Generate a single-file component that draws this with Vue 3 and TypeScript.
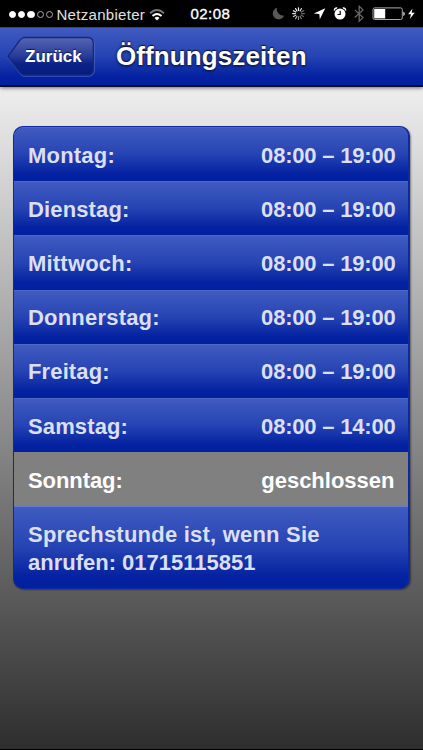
<script setup lang="ts">
interface OpeningHours {
  key: string
  day: string
  time: string
  closed?: boolean
}

const hours: OpeningHours[] = [
  { key: 'mo', day: 'Montag:', time: '08:00 – 19:00' },
  { key: 'di', day: 'Dienstag:', time: '08:00 – 19:00' },
  { key: 'mi', day: 'Mittwoch:', time: '08:00 – 19:00' },
  { key: 'do', day: 'Donnerstag:', time: '08:00 – 19:00' },
  { key: 'fr', day: 'Freitag:', time: '08:00 – 19:00' },
  { key: 'sa', day: 'Samstag:', time: '08:00 – 14:00' },
  { key: 'so', day: 'Sonntag:', time: 'geschlossen', closed: true },
]

const signal: boolean[] = [true, true, true, false, false]
const spokes: number[] = [1, 0.9, 0.45, 0.4, 0.4, 0.5, 0.6, 0.7, 0.8, 0.9, 1, 1]
</script>

<template>
  <div class="screen">
    <header class="status">
      <div class="carrier">
        <span class="signal">
          <i v-for="(on, i) in signal" :key="i" class="dot" :class="{ on }"></i>
        </span>
        <span class="network">Netzanbieter</span>
        <svg class="wifi" width="16" height="12" viewBox="0 0 16 12" fill="none" stroke="#fff" stroke-width="1.9">
          <path d="M1 4.2Q8-2.1 15 4.2" stroke="#777" />
          <path d="M3.5 7Q8 3 12.5 7" />
          <path d="M5.5 8.9Q8 6.7 10.5 8.9L8 11.4Z" fill="#fff" stroke="none" />
        </svg>
      </div>
      <span class="clock">02:08</span>
      <svg class="indicators" width="153" height="28" viewBox="270 0 153 28">
        <path d="M277 7.8A5.9 5.9 0 1 0 284.2 15.6A6.5 6.5 0 0 1 277 7.8Z" fill="#585858" />
        <g stroke="#fff" stroke-width="1.15" stroke-linecap="round">
          <line
            v-for="(o, i) in spokes"
            :key="i"
            x1="298.5"
            y1="10.5"
            x2="298.5"
            y2="7.7"
            :opacity="o"
            :transform="`rotate(${i * 30} 298.5 13.6)`"
          />
        </g>
        <path d="M325.3 8.3L319.8 19.3L319.3 13.9L313.8 13.5Z" fill="#fff" />
        <g>
          <circle cx="340" cy="14" r="5.5" fill="#fff" />
          <path d="M334.5 10.6A2.2 2.2 0 0 1 337.2 8M342.8 8A2.2 2.2 0 0 1 345.5 10.6" fill="none" stroke="#fff" stroke-width="1.5" />
          <path d="M340.2 10.8V14.5H337.5" fill="none" stroke="#000" stroke-width="1.2" />
        </g>
        <path d="M354.8 9.9L363 17.6L359.2 21.2V6.3L363 9.9L354.8 17.5" fill="none" stroke="#686868" stroke-width="1.3" />
        <rect x="373" y="7.9" width="29.3" height="11.6" rx="1.6" fill="none" stroke="#aaa" stroke-width="1" />
        <rect x="374.2" y="9" width="11" height="9.4" fill="#fff" />
        <path d="M403.3 11.4A2.6 2.6 0 0 1 403.3 16.1Z" fill="#ddd" />
        <path d="M412.5 8.4L408.1 14.3H411L409.8 19.1L414.7 12.7H411.6Z" fill="#fff" />
      </svg>
    </header>

    <nav class="bar">
      <button class="back" type="button">
        <svg class="back-shape" width="90" height="42" viewBox="0 0 90 42">
          <defs>
            <linearGradient id="backFill" x1="0" y1="0" x2="0" y2="1">
              <stop offset="0" stop-color="#5566b2" />
              <stop offset="0.5" stop-color="#283b99" />
              <stop offset="0.7" stop-color="#0d2287" />
              <stop offset="1" stop-color="#061b80" />
            </linearGradient>
          </defs>
          <path d="M17.5 2.5H82Q88.3 2.5 88.3 8.5V34Q88.3 40.3 82 40.3H17.5Q14.5 39 12 35L2 21.5L12 7Q14.5 3.5 17.5 2.5Z" fill="none" stroke="#5c74cb" stroke-opacity="0.65" />
          <path d="M17.5 1.5H81.5Q87.3 1.5 87.3 7.5V33Q87.3 38.9 81.5 38.9H17.5Q15 38 12.5 34.5L2 20.4L12.5 6Q15 2.5 17.5 1.5Z" fill="url(#backFill)" stroke="#142878" stroke-width="1.3" />
        </svg>
        <span class="back-label">Zurück</span>
      </button>
      <h1 class="title">Öffnungszeiten</h1>
    </nav>

    <main class="content">
      <ul class="card">
        <li v-for="h in hours" :key="h.key" class="row" :class="{ closed: h.closed }">
          <span :class="['day', h.key]">{{ h.day }}</span>
          <span class="time">{{ h.time }}</span>
        </li>
        <li class="note">
          <span class="note-a">Sprechstunde ist, wenn Sie</span>
          <span class="note-b">anrufen: 01715115851</span>
        </li>
      </ul>
    </main>
  </div>
</template>

<style>
body {
  margin: 0;
  background: #000;
}
</style>

<style scoped>
.screen {
  width: 423px;
  height: 750px;
  overflow: hidden;
  display: flex;
  flex-direction: column;
  background: #000;
  font-family: "Liberation Sans", Arial, sans-serif;
}

.status {
  flex: none;
  height: 27px;
  display: grid;
  grid-template-columns: 190px 80px 153px;
  color: #fff;
  background: #000;
}

.carrier {
  display: flex;
  align-items: center;
  padding: 1px 0 0 8.5px;
}

.signal {
  display: flex;
  gap: 2px;
}

.dot {
  box-sizing: border-box;
  width: 7.4px;
  height: 7.4px;
  border: 1px solid #aaa;
  border-radius: 50%;
}

.dot.on {
  background: #fff;
  border-color: #fff;
}

.network {
  margin-left: 3px;
  width: 89px;
  font-size: 15px;
  line-height: 17px;
  letter-spacing: 0.3px;
  color: #e0e0e0;
}

.wifi {
  margin-left: 4px;
}

.clock {
  padding-left: 0.5px;
  font-size: 15px;
  line-height: 28px;
  letter-spacing: 0.45px;
  -webkit-text-stroke: 0.35px #fff;
}

.indicators {
  display: block;
}

.bar {
  flex: none;
  position: relative;
  z-index: 1;
  box-sizing: border-box;
  height: 60px;
  display: flex;
  align-items: flex-start;
  padding: 8px 0 0 6px;
  border-top: 1px solid #2e449c;
  border-bottom: 2px solid #080d2c;
  background: linear-gradient(#405bc0, #2543b3 50%, #0422a0 85%, #0020a0);
  box-shadow: 0 1px 4px rgba(0, 0, 0, 0.55);
}

.back {
  width: 90px;
  height: 42px;
  padding: 0;
  border: 0;
  background: none;
  display: grid;
  font-family: inherit;
}

.back-shape,
.back-label {
  grid-area: 1 / 1;
}

.back-label {
  padding-left: 19px;
  text-align: left;
  font-size: 17px;
  font-weight: bold;
  line-height: 41px;
  color: #fff;
  text-shadow: 0 -1px 1px rgba(0, 0, 0, 0.6);
}

.title {
  margin: 0 0 0 20px;
  font-size: 26px;
  font-weight: bold;
  line-height: 41px;
  letter-spacing: 0.1px;
  white-space: nowrap;
  color: #fff;
  text-shadow: 0 -1px 1px rgba(0, 0, 0, 0.7), 0 1px 3px rgba(0, 0, 0, 0.8);
}

.content {
  flex: none;
  box-sizing: border-box;
  height: 662px;
  padding: 39px 13px 0;
  background: linear-gradient(#eee, #2e2e2e);
}

.card {
  box-sizing: border-box;
  width: 397px;
  height: 463px;
  margin: 0;
  padding: 0;
  list-style: none;
  overflow: hidden;
  border: 1px solid #0d2b9e;
  border-right-width: 2px;
  border-radius: 10px;
  background: #0d2b9e;
  box-shadow: 1px 1px 2px rgba(0, 0, 0, 0.4);
  font-size: 22px;
  font-weight: bold;
  color: #dcdff0;
}

.row {
  box-sizing: border-box;
  height: 54.2px;
  display: flex;
  justify-content: space-between;
  align-items: center;
  padding: 2px 12.5px 0 14px;
  white-space: nowrap;
  background: linear-gradient(#405bc0, #2543b3 50%, #0422a0 86%, #0020a0);
  border-top: 1px solid #5068c4;
}

.row.closed {
  color: #fff;
  background: #808080;
  border-top-color: #808080;
}

.day {
  letter-spacing: 0.2px;
}

.day.di,
.day.fr,
.day.sa {
  letter-spacing: 0.13px;
}

.day.so {
  letter-spacing: -0.08px;
}

.time {
  letter-spacing: -0.2px;
}

.closed .time {
  margin-right: 1px;
  letter-spacing: 0;
}

.note {
  box-sizing: border-box;
  height: 82px;
  display: flex;
  flex-direction: column;
  padding: 13.5px 14px 0;
  line-height: 28px;
  white-space: nowrap;
  background: linear-gradient(#405bc0, #2543b3 50%, #0422a0 86%, #0020a0);
  border-top: 1px solid #6478ca;
}

.note-a {
  letter-spacing: 0.22px;
}
</style>
